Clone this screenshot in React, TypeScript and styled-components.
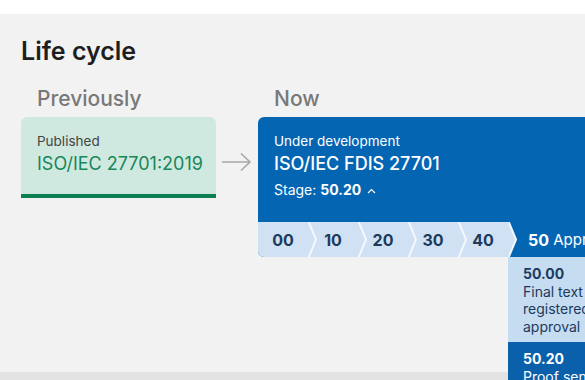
import React from "react";
import styled, { createGlobalStyle } from "styled-components";

const GlobalStyle = createGlobalStyle`
  html, body {
    margin: 0;
    padding: 0;
    background: #fff;
    overflow: hidden;
  }
  body {
    font-family: Inter, "Noto Sans", "Liberation Sans", sans-serif;
  }
`;

const stages = ["00", "10", "20", "30", "40"];

export default function App() {
    return (
        <Page>
            <GlobalStyle />
            <Section>
                <Title>Life cycle</Title>

                <Columns>
                    {/* previous edition */}
                    <Column>
                        <ColumnHeading>Previously</ColumnHeading>
                        <PublishedCard>
                            <CardLabel>Published</CardLabel>
                            <PublishedRef>ISO/IEC 27701:2019</PublishedRef>
                        </PublishedCard>
                    </Column>

                    <ArrowCell>
                        <svg width="31" height="20" viewBox="0 0 31 20">
                            <path d="M1 10 H29 M20 1.5 L29 10 L20 18.5" fill="none" stroke="#a8a8a8" strokeWidth="1.6" />
                        </svg>
                    </ArrowCell>

                    {/* current work */}
                    <Column>
                        <ColumnHeading>Now</ColumnHeading>
                        <CurrentCard>
                            <CurrentBody>
                                <CurrentLabel>Under development</CurrentLabel>
                                <CurrentRef>ISO/IEC FDIS 27701</CurrentRef>
                                <StageLine>
                                    Stage: <strong>50.20</strong>
                                    <svg width="9" height="6" viewBox="0 0 9 6">
                                        <path d="M1 5 L4.5 1.5 L8 5" fill="none" stroke="#fff" strokeWidth="1.2" />
                                    </svg>
                                </StageLine>
                            </CurrentBody>

                            <StageBar>
                                {stages.map((s) => (
                                    <Step key={s}>
                                        {s}
                                        <Chevron width="9" height="35" viewBox="0 0 9 35">
                                            <path d="M0.8 0 L8 17.5 L0.8 35" fill="none" stroke="#f4f8fc" strokeWidth="2" />
                                        </Chevron>
                                    </Step>
                                ))}
                                <ActiveStep>
                                    <strong>50</strong>&nbsp;Approval
                                </ActiveStep>
                            </StageBar>

                            {/* opened stage list under the active step */}
                            <StageMenu>
                                <MenuItem>
                                    <strong>50.00</strong>
                                    Final text received or FDIS<br />
                                    registered for formal<br />
                                    approval
                                </MenuItem>
                                <MenuItem $current>
                                    <strong>50.20</strong>
                                    Proof sent to secretariat or FDIS ballot initiated: 8 weeks
                                </MenuItem>
                            </StageMenu>
                        </CurrentCard>
                    </Column>
                </Columns>
            </Section>
            <NextSection />
        </Page>
    );
}

/* ================== styled-components ================== */

const Page = styled.div`
    padding-top: 14px;
    width: 585px;
    height: 380px;
    box-sizing: border-box;
    overflow: hidden;
`;

const Section = styled.section`
    height: 358px;
    box-sizing: border-box;
    background: #f2f2f2;
    padding: 21px 0 0 21px;
`;

const Title = styled.h2`
    margin: 0;
    font-size: 25px;
    line-height: 32px;
    font-weight: 600;
    color: #1e1e1e;
`;

const Columns = styled.div`
    display: flex;
    align-items: flex-start;
    margin-top: 18px;
`;

const Column = styled.div`
    display: flex;
    flex-direction: column;
    gap: 4px;
    flex-shrink: 0;
`;

const ColumnHeading = styled.div`
    padding-left: 16px;
    font-size: 21px;
    line-height: 28px;
    font-weight: 500;
    color: #787878;
`;

const PublishedCard = styled.div`
    width: 195px;
    height: 81px;
    box-sizing: border-box;
    padding: 15px 16px 0;
    background: #cfe9e0;
    border-radius: 6px 6px 0 0;
    border-bottom: 4px solid #0b7f51;
`;

const CardLabel = styled.div`
    font-size: 13.5px;
    line-height: 18px;
    color: #444;
`;

const PublishedRef = styled.div`
    margin-top: 3px;
    font-size: 18px;
    line-height: 22px;
    font-weight: 400;
    white-space: nowrap;
    color: #17875a;
`;

const ArrowCell = styled.div`
    width: 42px;
    box-sizing: border-box;
    flex-shrink: 0;
    display: flex;
    justify-content: center;
    padding-top: 67px;
    padding-right: 2px;
`;

const CurrentCard = styled.div`
    position: relative;
    width: 440px;
    background: #0466b3;
    border-radius: 6px;
    color: #fff;
`;

const CurrentBody = styled.div`
    height: 105px;
    box-sizing: border-box;
    padding: 15px 16px 0;
`;

const CurrentLabel = styled.div`
    font-size: 13.5px;
    line-height: 18px;
`;

const CurrentRef = styled.div`
    margin-top: 3px;
    font-size: 18px;
    line-height: 22px;
    font-weight: 500;
`;

const StageLine = styled.div`
    margin-top: 6px;
    font-size: 14px;
    line-height: 18px;
    display: flex;
    align-items: center;
    gap: 4px;

    strong {
        font-size: 14px;
        font-weight: 700;
    }

    svg {
        margin-top: 2px;
        margin-left: 2px;
    }
`;

const StageBar = styled.div`
    display: flex;
    height: 35px;
    background: #cfe1f2;
    border-radius: 0 0 0 6px;
`;

const Step = styled.div`
    position: relative;
    width: 50px;
    flex-shrink: 0;
    display: flex;
    align-items: center;
    justify-content: center;
    font-size: 16px;
    font-weight: 700;
    color: #1c3a5e;
`;

const Chevron = styled.svg`
    position: absolute;
    right: -9px;
    top: 0;
    z-index: 1;
`;

const ActiveStep = styled.div`
    flex: 1;
    display: flex;
    align-items: center;
    padding-left: 20px;
    font-size: 15px;
    color: #fff;
    background: #0466b3;
    clip-path: polygon(0 0, 100% 0, 100% 100%, 0 100%, 8px 50%);

    strong {
        font-size: 16px;
        font-weight: 700;
    }
`;

const StageMenu = styled.div`
    position: absolute;
    left: 250px;
    top: 140px;
    width: 240px;
    z-index: 2;
`;

const MenuItem = styled.div<{ $current?: boolean }>`
    padding: 8px 15px 7px;
    font-size: 14px;
    line-height: 17.5px;
    white-space: nowrap;
    background: ${({ $current }) => ($current ? "#0a60ab" : "#c6dcf0")};
    color: ${({ $current }) => ($current ? "#fff" : "#1c3a5e")};

    strong {
        display: block;
        font-weight: 700;
    }
`;

const NextSection = styled.div`
    height: 8px;
    background: #e3e3e3;
`;
